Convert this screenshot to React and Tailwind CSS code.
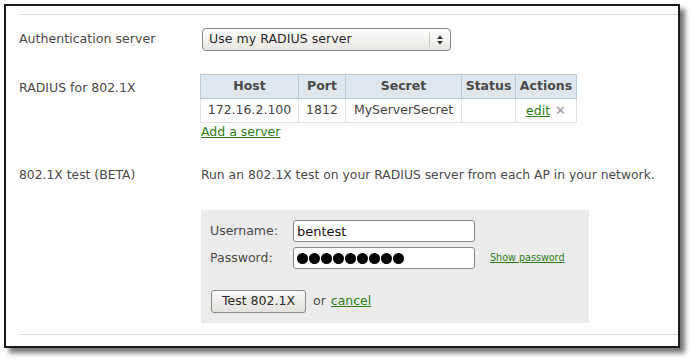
import React from 'react';

const font = { fontFamily: '"DejaVu Sans", Verdana, sans-serif' };

function SelectBox() {
  return (
    <div className="flex h-[23px] w-[249px] items-center rounded-[4px] border border-[#8c8a86] bg-gradient-to-b from-white to-[#e9e7e3] text-[12.6px] text-[#2b2b2b]">
      <span className="flex-1 pl-[6px]">Use my RADIUS server</span>
      <span className="h-[15px] w-px bg-[#cfcdc9]" />
      <svg width="18" height="12" viewBox="0 0 18 12" className="mx-[1px]">
        <path d="M6 5 L9 1.5 L12 5 Z" fill="#333" />
        <path d="M6 7 L9 10.5 L12 7 Z" fill="#333" />
      </svg>
    </div>
  );
}

function ServerTable() {
  const th = 'h-[24px] border border-[#bccbd8] bg-[#dfe7ee] px-[3px] text-center font-bold text-[#4a4a4a]';
  const td = 'h-[24px] border border-[#e2e2e2] px-[4px] text-center text-[#444]';
  return (
    <table className="border-collapse text-[12.5px]">
      <thead>
        <tr>
          <th className={`${th} w-[98px]`}>Host</th>
          <th className={`${th} w-[47px]`}>Port</th>
          <th className={`${th} w-[116px]`}>Secret</th>
          <th className={`${th} w-[54px]`}>Status</th>
          <th className={`${th} w-[61px]`}>Actions</th>
        </tr>
      </thead>
      <tbody>
        <tr>
          <td className={td}>172.16.2.100</td>
          <td className={td}>1812</td>
          <td className={td}>MyServerSecret</td>
          <td className={td}></td>
          <td className={td}>
            <span className="text-[#2f7d1a] underline">edit</span>
            <span className="ml-[5px] text-[13px] text-[#9a9a9a]">✕</span>
          </td>
        </tr>
      </tbody>
    </table>
  );
}

function Dots({ count }) {
  return (
    <div className="flex gap-[1px]">
      {Array.from({ length: count }).map((_, i) => (
        <span key={i} className="h-[11px] w-[11px] rounded-full bg-black" />
      ))}
    </div>
  );
}

function TestBox() {
  return (
    <div className="w-[388px] bg-[#ececec] pb-[10px] pl-[9px] pt-[10px] text-[12.5px] text-[#4a4a4a]">
      <div className="flex h-[22px] items-center">
        <span className="w-[83px]">Username:</span>
        <div className="flex h-[22px] w-[182px] items-center rounded-[3px] border border-[#8a8a8a] bg-white pl-[3px] text-[13px] text-[#111]">
          bentest
        </div>
      </div>
      <div className="mt-[5px] flex h-[22px] items-center">
        <span className="w-[83px]">Password:</span>
        <div className="flex h-[22px] w-[182px] items-center rounded-[3px] border border-[#8a8a8a] bg-white pl-[3px]">
          <Dots count={9} />
        </div>
        <span className="ml-[15px] text-[9.6px] text-[#2f7d1a] underline">Show password</span>
      </div>
      <div className="mt-[21px] flex items-center">
        <div className="ml-[1px] flex h-[23px] w-[95px] items-center justify-center rounded-[3px] border border-[#8c8a86] bg-gradient-to-b from-[#f8f8f7] to-[#e4e2de] text-[#2b2b2b]">
          Test 802.1X
        </div>
        <span className="ml-[7px]">or</span>
        <span className="ml-[5px] text-[#2f7d1a] underline">cancel</span>
      </div>
    </div>
  );
}

export default function App() {
  return (
    <div className="h-[360px] w-[691px] bg-white pl-[4px] pt-[4px]" style={font}>
      <div className="h-[344px] w-[676px] border-2 border-[#1c1a16] bg-white shadow-[5px_5px_5px_rgba(0,0,0,0.55)]">
        <div className="ml-[13px] mt-[8px] h-px bg-[#dcdcdc]" />

        <div className="mt-[13px] flex items-center pl-[13px] text-[12.6px] text-[#4a4a4a]">
          <span className="w-[183px]">Authentication server</span>
          <SelectBox />
        </div>

        <div className="mt-[23px] flex pl-[13px] text-[12.5px] text-[#4a4a4a]">
          <span className="w-[181px] pt-[5px]">RADIUS for 802.1X</span>
          <div>
            <ServerTable />
            <div className="ml-[1px] text-[#2f7d1a] underline">Add a server</div>
          </div>
        </div>

        <div className="mt-[24px] flex pl-[13px] text-[12.35px] text-[#4a4a4a]">
          <span className="w-[182px]">802.1X test (BETA)</span>
          <span>Run an 802.1X test on your RADIUS server from each AP in your network.</span>
        </div>

        <div className="mt-[26px] pl-[195px]">
          <TestBox />
        </div>

        <div className="ml-[13px] mt-[11px] h-px bg-[#dcdcdc]" />
      </div>
    </div>
  );
}
